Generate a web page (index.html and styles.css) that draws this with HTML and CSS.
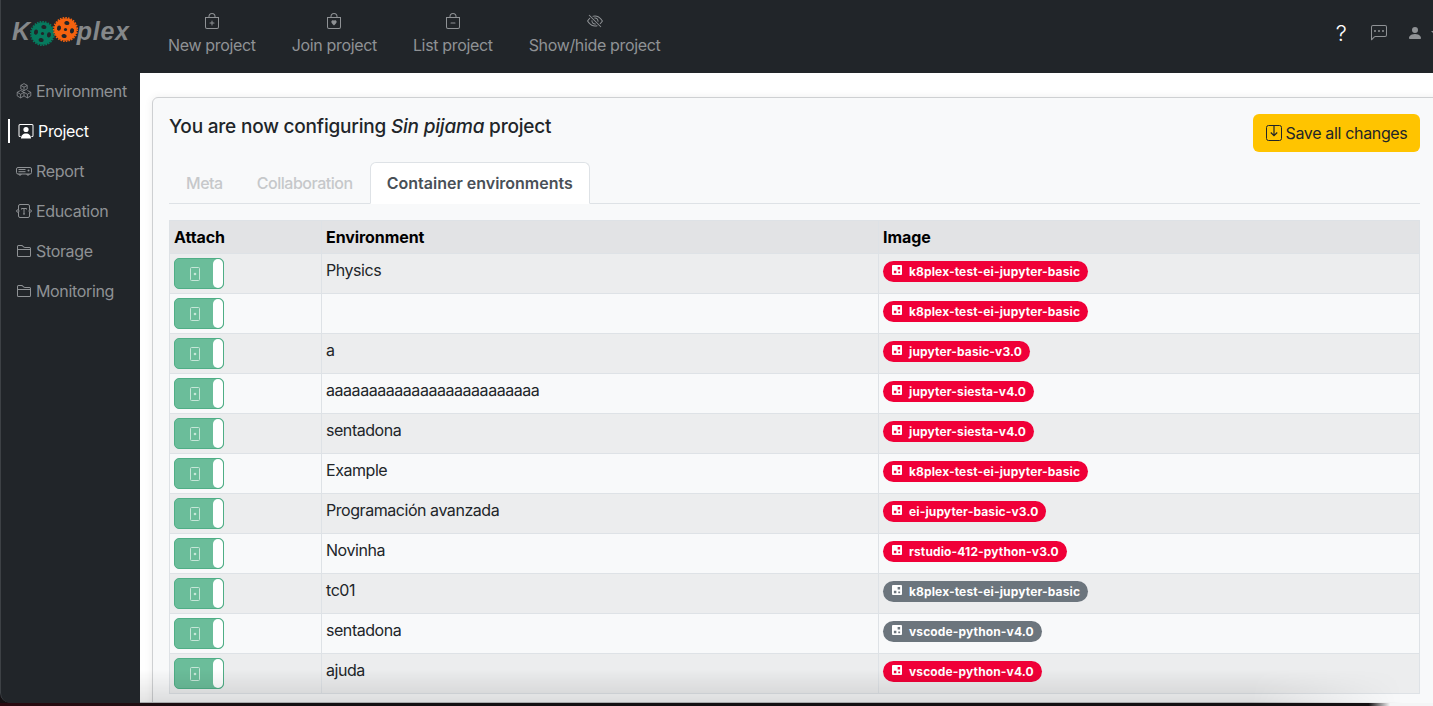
FILE: index.html
```html
<!DOCTYPE html>
<html lang="en">
<head>
<meta charset="utf-8">
<title>Kooplex</title>
<link rel="stylesheet" href="styles.css">
</head>
<body>
<svg class="defs" width="0" height="0" aria-hidden="true">
  <defs>
    <symbol id="bag" viewBox="0 0 16 16"><path d="M8 1a2.5 2.5 0 0 1 2.5 2.5V4h-5v-.5A2.5 2.5 0 0 1 8 1zm3.5 3v-.5a3.5 3.5 0 1 0-7 0V4H1v10a2 2 0 0 0 2 2h10a2 2 0 0 0 2-2V4h-3.5zM2 5h12v9a1 1 0 0 1-1 1H3a1 1 0 0 1-1-1V5z"/></symbol>
    <symbol id="folder" viewBox="0 0 16 16"><path d="M1 3.5A1.5 1.5 0 0 1 2.5 2h2.764c.958 0 1.76.56 2.311 1.184C7.985 3.648 8.48 4 9 4h4.5A1.5 1.5 0 0 1 15 5.5v7a1.5 1.5 0 0 1-1.5 1.5h-11A1.5 1.5 0 0 1 1 12.5v-9zM2.5 3a.5.5 0 0 0-.5.5V6h12v-.5a.5.5 0 0 0-.5-.5H9c-.964 0-1.71-.629-2.174-1.154C6.374 3.334 5.82 3 5.264 3H2.5zM14 7H2v5.5a.5.5 0 0 0 .5.5h11a.5.5 0 0 0 .5-.5V7z"/></symbol>
    <symbol id="device" viewBox="0 0 16 16"><rect x="3.5" y="1.5" width="9" height="13" rx="1" fill="none" stroke="currentColor"/><circle cx="8" cy="8" r="1.3"/></symbol>
    <symbol id="qr" viewBox="0 0 16 16"><path fill-rule="evenodd" d="M1.500 0h13A1.500 1.500 0 0 1 16 1.500v13a1.500 1.500 0 0 1-1.500 1.500h-13A1.500 1.500 0 0 1 0 14.500v-13A1.500 1.500 0 0 1 1.500 0zM9 3v4h4V3H9zM3 9v4h4V9H3zm7 1.500V13h3v-2.500h-3z"/></symbol>
    <symbol id="gear" viewBox="0 0 32 32">
      <circle cx="16" cy="16" r="14.500" fill="currentColor"/>
      <circle cx="16" cy="16" r="15" fill="none" stroke="currentColor" stroke-width="2" stroke-dasharray="2 1.500"/>
      <g fill="#212529">
        <ellipse cx="16" cy="7.500" rx="3.300" ry="2.600" transform="rotate(12 16 16)"/>
        <ellipse cx="16" cy="7.500" rx="3.300" ry="2.600" transform="rotate(102 16 16)"/>
        <ellipse cx="16" cy="7.500" rx="3.300" ry="2.600" transform="rotate(192 16 16)"/>
        <ellipse cx="16" cy="7.500" rx="3.300" ry="2.600" transform="rotate(282 16 16)"/>
        <circle cx="16" cy="16" r="2"/>
      </g>
    </symbol>
  </defs>
</svg>

<div class="window">
  <header class="topbar">
    <a class="logo">
      <span class="logo-text">K</span>
      <span class="gears">
        <svg class="gear gear-green"><use href="#gear"/></svg>
        <svg class="gear gear-orange"><use href="#gear"/></svg>
      </span>
      <span class="logo-text">plex</span>
    </a>
    <nav class="topnav">
      <a class="topnav-item">
        <svg class="icon" viewBox="0 0 16 16"><use href="#bag"/><path d="M8 7.500a.5.5 0 0 1 .5.5v1.500H10a.5.5 0 0 1 0 1H8.500V12a.5.5 0 0 1-1 0v-1.500H6a.5.5 0 0 1 0-1h1.500V8a.5.5 0 0 1 .5-.5z"/></svg>
        <span>New project</span>
      </a>
      <a class="topnav-item">
        <svg class="icon" viewBox="0 0 16 16"><use href="#bag"/><path d="M8 7.800c1.600-1.500 5 1 0 4.700-5-3.700-1.600-6.200 0-4.700z"/></svg>
        <span>Join project</span>
      </a>
      <a class="topnav-item">
        <svg class="icon" viewBox="0 0 16 16"><use href="#bag"/><path d="M5.500 10a.5.5 0 0 1 .5-.5h4a.5.5 0 0 1 0 1H6a.5.5 0 0 1-.5-.5z"/></svg>
        <span>List project</span>
      </a>
      <a class="topnav-item">
        <svg class="icon" viewBox="0 0 16 16"><path d="M13.359 11.238C15.060 9.720 16 8 16 8s-3-5.500-8-5.500a7.028 7.028 0 0 0-2.790.588l.770.771A5.944 5.944 0 0 1 8 3.500c2.120 0 3.879 1.168 5.168 2.457A13.134 13.134 0 0 1 14.828 8c-.058.087-.122.183-.195.288-.335.480-.830 1.120-1.465 1.755-.165.165-.337.328-.517.486l.708.709z"/><path d="M11.297 9.176a3.500 3.500 0 0 0-4.474-4.474l.823.823a2.500 2.500 0 0 1 2.829 2.829l.822.822zm-2.943 1.299.822.822a3.500 3.500 0 0 1-4.474-4.474l.823.823a2.500 2.500 0 0 0 2.829 2.829z"/><path d="M3.350 5.470c-.180.160-.353.322-.518.487A13.134 13.134 0 0 0 1.172 8l.195.288c.335.480.830 1.120 1.465 1.755C4.121 11.332 5.881 12.500 8 12.500c.716 0 1.390-.133 2.020-.360l.770.772A7.029 7.029 0 0 1 8 13.500C3 13.500 0 8 0 8s.939-1.721 2.641-3.238l.708.709zm10.296 8.884-12-12 .708-.708 12 12-.708.708z"/></svg>
        <span>Show/hide project</span>
      </a>
    </nav>
    <div class="topright">
      <span class="help">?</span>
      <svg class="icon" viewBox="0 0 16 16"><path d="M14 1a1 1 0 0 1 1 1v8a1 1 0 0 1-1 1H4.414A2 2 0 0 0 3 11.586l-2 2V2a1 1 0 0 1 1-1h12zM2 0a2 2 0 0 0-2 2v12.793a.5.5 0 0 0 .854.353l2.853-2.853A1 1 0 0 1 4.414 12H14a2 2 0 0 0 2-2V2a2 2 0 0 0-2-2H2z"/><path d="M5 6a1 1 0 1 1-2 0 1 1 0 0 1 2 0zm4 0a1 1 0 1 1-2 0 1 1 0 0 1 2 0zm4 0a1 1 0 1 1-2 0 1 1 0 0 1 2 0z"/></svg>
      <span class="user">
        <svg class="icon" viewBox="0 0 16 16"><path d="M3 14s-1 0-1-1 1-4 6-4 6 3 6 4-1 1-1 1H3zm5-6a3 3 0 1 0 0-6 3 3 0 0 0 0 6z"/></svg>
        <span class="caret"></span>
      </span>
    </div>
  </header>

  <div class="main">
    <aside class="sidebar">
      <a class="side-item">
        <svg class="icon line" viewBox="0 0 16 16"><path stroke-width=".8" d="M8 .6l3.200 1.800v3.500L8 7.700 4.800 5.900V2.400zM4.800 2.400 8 4.200l3.200-1.800M8 4.200v3.500M4.600 7.500l3.400 1.800v3.600l-3.400 2-3.400-2V9.300zM1.200 9.300l3.400 2 3.400-2M4.600 11.300v3.600M11.400 7.500l3.400 1.800v3.600l-3.400 2-3.400-2M8 9.300l3.400 2 3.400-2M11.400 11.300v3.600"/></svg>
        <span>Environment</span>
      </a>
      <a class="side-item active">
        <svg class="icon" viewBox="0 0 16 16"><path d="M2 1h12a1.500 1.500 0 0 1 1.500 1.500v10A1.500 1.500 0 0 1 14 14h-.6v-1H14a.5.5 0 0 0 .5-.5v-10A.5.5 0 0 0 14 2H2a.5.5 0 0 0-.5.5v10a.5.5 0 0 0 .5.5h.6v1H2a1.500 1.500 0 0 1-1.500-1.500v-10A1.500 1.500 0 0 1 2 1z"/><circle cx="8" cy="6.500" r="2.600"/><path d="M3 15.500c0-3 2-5 5-5s5 2 5 5z"/></svg>
        <span>Project</span>
      </a>
      <a class="side-item">
        <svg class="icon line" viewBox="0 0 16 16"><rect x=".5" y="4.500" width="15" height="6.500" rx="1.500"/><path d="M2.500 6.500h7M2.500 8.700h7M3 11v1h2v-1M11 11v1h2v-1"/><circle class="dot" cx="12.500" cy="7.500" r="1"/></svg>
        <span>Report</span>
      </a>
      <a class="side-item">
        <svg class="icon line" viewBox="0 0 16 16"><rect x="2.500" y="1.500" width="11" height="13" rx="1.500"/><circle class="knock" cx="1.800" cy="8" r="1.200"/><circle class="knock" cx="14.200" cy="8" r="1.200"/><path d="M5.500 6.500v-1h5v1M8 5.500v5.500M7 11h2"/></svg>
        <span>Education</span>
      </a>
      <a class="side-item">
        <svg class="icon" viewBox="0 0 16 16"><use href="#folder"/></svg>
        <span>Storage</span>
      </a>
      <a class="side-item">
        <svg class="icon" viewBox="0 0 16 16"><use href="#folder"/></svg>
        <span>Monitoring</span>
      </a>
    </aside>

    <main class="content">
      <section class="card">
        <div class="card-head">
          <h1 class="title">You are now configuring <em>Sin pijama</em> project</h1>
          <button class="save-btn">
            <svg class="save-icon" viewBox="0 0 16 16"><rect x=".5" y=".5" width="15" height="15" rx="2"/><path d="M8 1v9.500M4.800 7.500 8 10.700l3.200-3.200" stroke-width="1.200"/></svg>
            Save all changes
          </button>
        </div>
        <ul class="tabs">
          <li class="tab">Meta</li>
          <li class="tab">Collaboration</li>
          <li class="tab active">Container environments</li>
        </ul>
        <table class="env-table">
          <thead>
            <tr><th class="col-attach">Attach</th><th class="col-env">Environment</th><th>Image</th></tr>
          </thead>
          <tbody>
            <tr><td><span class="switch"><svg class="switch-icon"><use href="#device"/></svg></span></td><td>Physics</td><td><span class="badge"><svg class="badge-icon"><use href="#qr"/></svg>k8plex-test-ei-jupyter-basic</span></td></tr>
            <tr><td><span class="switch"><svg class="switch-icon"><use href="#device"/></svg></span></td><td></td><td><span class="badge"><svg class="badge-icon"><use href="#qr"/></svg>k8plex-test-ei-jupyter-basic</span></td></tr>
            <tr><td><span class="switch"><svg class="switch-icon"><use href="#device"/></svg></span></td><td>a</td><td><span class="badge"><svg class="badge-icon"><use href="#qr"/></svg>jupyter-basic-v3.0</span></td></tr>
            <tr><td><span class="switch"><svg class="switch-icon"><use href="#device"/></svg></span></td><td>aaaaaaaaaaaaaaaaaaaaaaaaa</td><td><span class="badge"><svg class="badge-icon"><use href="#qr"/></svg>jupyter-siesta-v4.0</span></td></tr>
            <tr><td><span class="switch"><svg class="switch-icon"><use href="#device"/></svg></span></td><td>sentadona</td><td><span class="badge"><svg class="badge-icon"><use href="#qr"/></svg>jupyter-siesta-v4.0</span></td></tr>
            <tr><td><span class="switch"><svg class="switch-icon"><use href="#device"/></svg></span></td><td>Example</td><td><span class="badge"><svg class="badge-icon"><use href="#qr"/></svg>k8plex-test-ei-jupyter-basic</span></td></tr>
            <tr><td><span class="switch"><svg class="switch-icon"><use href="#device"/></svg></span></td><td>Programación avanzada</td><td><span class="badge"><svg class="badge-icon"><use href="#qr"/></svg>ei-jupyter-basic-v3.0</span></td></tr>
            <tr><td><span class="switch"><svg class="switch-icon"><use href="#device"/></svg></span></td><td>Novinha</td><td><span class="badge"><svg class="badge-icon"><use href="#qr"/></svg>rstudio-412-python-v3.0</span></td></tr>
            <tr><td><span class="switch"><svg class="switch-icon"><use href="#device"/></svg></span></td><td>tc01</td><td><span class="badge muted"><svg class="badge-icon"><use href="#qr"/></svg>k8plex-test-ei-jupyter-basic</span></td></tr>
            <tr><td><span class="switch"><svg class="switch-icon"><use href="#device"/></svg></span></td><td>sentadona</td><td><span class="badge muted"><svg class="badge-icon"><use href="#qr"/></svg>vscode-python-v4.0</span></td></tr>
            <tr><td><span class="switch"><svg class="switch-icon"><use href="#device"/></svg></span></td><td>ajuda</td><td><span class="badge"><svg class="badge-icon"><use href="#qr"/></svg>vscode-python-v4.0</span></td></tr>
          </tbody>
        </table>
      </section>
      <div class="bottom-shade"></div>
    </main>
  </div>
</div>
<div class="desktop-strip"></div>
</body>
</html>
```
FILE: styles.css
```css
* { box-sizing: border-box; }
html, body { margin: 0; height: 706px; overflow: hidden; }
body {
  background: #141012;
  font-family: Inter, "Liberation Sans", sans-serif;
  font-size: 16px;
  letter-spacing: -.34px;
  color: #212529;
}
.defs { position: absolute; }
.window {
  height: 703px;
  display: flex;
  flex-direction: column;
  overflow: hidden;
  border-bottom-left-radius: 10px;
  background: #212529;
}
.desktop-strip {
  height: 3px;
  background: linear-gradient(90deg, #2a0a10, #141012 20%, #141012 95.5%, #f4f5f6 97%);
}
.icon { width: 16px; height: 16px; fill: currentColor; flex: none; }
.icon.line { fill: none; stroke: currentColor; }
.icon .dot { fill: currentColor; stroke: none; }
.icon .knock { fill: #212529; }

/* top bar */
.topbar {
  height: 73px;
  flex: none;
  display: flex;
  background: #212529;
  border-left: 1px solid #3d4145;
  color: #8f9295;
}
.logo {
  width: 149px;
  flex: none;
  display: flex;
  align-items: center;
  padding: 0 0 10px 11px;
}
.logo-text {
  font-family: "Liberation Sans", sans-serif;
  font-weight: 700;
  font-style: italic;
  font-size: 25px;
  letter-spacing: .7px;
  color: #85888a;
}
.gears { display: flex; width: 47px; margin-left: -1px; }
.gear { width: 25px; height: 25px; flex: none; }
.gear-green { color: #067a5e; margin-top: 4px; }
.gear-orange { color: #f4620f; margin-left: -2px; }
.topnav { display: flex; }
.topnav-item {
  display: flex;
  flex-direction: column;
  align-items: center;
  gap: 6px;
  padding: 13px 18px 0;
}
.topright {
  margin-left: auto;
  display: flex;
  align-items: center;
  padding-bottom: 7px;
  width: 102px;
  overflow: hidden;
  flex: none;
}
.help {
  color: #fff;
  font-size: 22px;
  font-weight: 300;
  width: 20px;
  flex: none;
  text-align: center;
  margin-right: 20px;
}
.user { display: flex; align-items: center; gap: 8px; margin-left: 20px; flex: none; }
.caret {
  width: 0;
  height: 0;
  flex: none;
  border-left: 4px solid transparent;
  border-right: 4px solid transparent;
  border-top: 4px solid #8f9295;
}

/* side bar */
.main { flex: 1; display: flex; min-height: 0; }
.sidebar {
  width: 140px;
  flex: none;
  display: flex;
  flex-direction: column;
  gap: 4px;
  background: #212529;
  border-left: 1px solid #3d4145;
  border-bottom-left-radius: 10px;
  color: #8f9295;
}
.side-item {
  height: 36px;
  display: flex;
  align-items: center;
  gap: 4px;
  padding-left: 15px;
}
.side-item.active {
  color: #fff;
  height: 24px;
  margin: 6px 0 6px 7px;
  padding-left: 8px;
  border-left: 2px solid #fff;
}

/* content */
.content {
  flex: 1;
  min-width: 0;
  position: relative;
  overflow: hidden;
  background: #fff;
  padding: 24px 0 0 12px;
}
.card {
  margin-right: -20px;
  height: 640px;
  padding: 0 32px 0 16px;
  background: #f8f9fa;
  border: 1px solid #ced0d2;
  border-radius: 6px 0 0 0;
  box-shadow: 0 0 8px rgba(0, 0, 0, .07);
}
.card-head {
  height: 64px;
  display: flex;
  justify-content: space-between;
  align-items: flex-start;
}
.title {
  margin: 17px 0 0;
  font-size: 19px;
  line-height: 24px;
  font-weight: 500;
  letter-spacing: -.2px;
}
.save-btn {
  margin-top: 16px;
  width: 167px;
  height: 38px;
  display: flex;
  align-items: center;
  justify-content: center;
  gap: 4px;
  border: 0;
  border-radius: 6px;
  background: #ffc400;
  color: #212529;
  font: inherit;
  letter-spacing: inherit;
}
.save-icon { width: 16px; height: 16px; flex: none; fill: none; stroke: currentColor; }
.tabs {
  list-style: none;
  margin: 0 0 16px;
  padding: 0;
  height: 42px;
  display: flex;
  border-bottom: 1px solid #dee2e6;
}
.tab {
  height: 42px;
  padding: 0 17px;
  line-height: 42px;
  color: #c6c8ca;
  font-weight: 500;
  letter-spacing: -.47px;
}
.tab.active {
  background: #fff;
  color: #495057;
  font-weight: 600;
  letter-spacing: 0;
  border: 1px solid #dee2e6;
  border-bottom-color: #fff;
  border-radius: 6px 6px 0 0;
  line-height: 40px;
  padding: 0 16px;
}

/* table */
.env-table {
  width: 1251px;
  table-layout: fixed;
  border-collapse: collapse;
  border: 1px solid #dee2e6;
}
.env-table th, .env-table td {
  border: 1px solid #dee2e6;
  padding: 4px;
  vertical-align: top;
  text-align: left;
}
.env-table th {
  height: 32px;
  padding-bottom: 3px;
  background: #e2e3e5;
  color: #000;
  font-weight: 700;
  letter-spacing: -.08px;
  line-height: 25px;
}
.env-table td { height: 40px; line-height: 24px; letter-spacing: -.45px; }
.env-table tbody tr:nth-child(odd) { background: #ecedee; }
.env-table tbody tr:nth-child(even) { background: #f8f9fa; }
.col-attach { width: 152px; }
.col-env { width: 557px; }
.switch {
  width: 50px;
  height: 31px;
  display: flex;
  align-items: center;
  justify-content: center;
  position: relative;
  padding-right: 8px;
  background: #6bbd9a;
  border: 1px solid #4fae86;
  border-radius: 5px;
}
.switch::after {
  content: "";
  position: absolute;
  right: 0;
  top: 0;
  width: 10px;
  height: 29px;
  background: #fff;
  border-radius: 5px;
}
.switch-icon { width: 16px; height: 16px; fill: #c6e6d8; color: #c6e6d8; }
.badge {
  display: inline-flex;
  align-items: center;
  height: 21px;
  margin-top: 3px;
  padding: 0 8px 0 9px;
  border-radius: 11px;
  background: #f00038;
  color: #fff;
  font-size: 12px;
  line-height: 21px;
  font-weight: 700;
  letter-spacing: .13px;
  vertical-align: top;
}
.badge.muted { background: #6c757d; }
.badge-icon { width: 10px; height: 10px; margin: -3px 7px 0 0; fill: #fff; flex: none; }
.bottom-shade {
  position: absolute;
  left: 0;
  right: 30px;
  bottom: 0;
  height: 34px;
  pointer-events: none;
  background: linear-gradient(180deg, rgba(0, 0, 0, 0), rgba(0, 0, 0, .11));
  border-bottom: 1px solid #a9abad;
  -webkit-mask-image: linear-gradient(90deg, #000 88%, transparent);
  mask-image: linear-gradient(90deg, #000 88%, transparent);
}
```
